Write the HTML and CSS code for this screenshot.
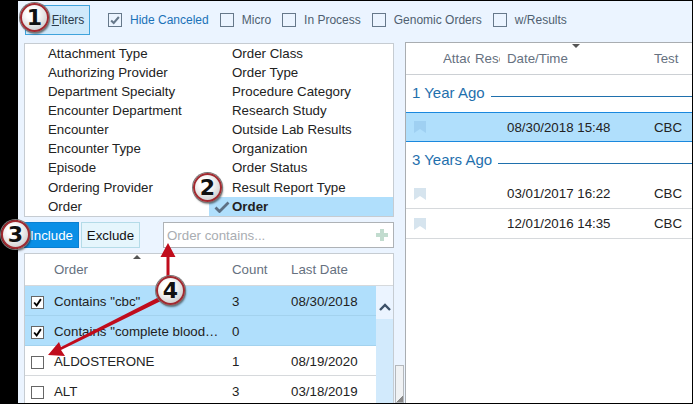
FILE: index.html
```html
<!DOCTYPE html>
<html lang="en">
<head>
    <meta charset="UTF-8">
    <meta name="viewport" content="width=device-width, initial-scale=1.0">
    <title>Order Filters</title>
    <link rel="stylesheet" href="styles.css">
</head>
<body>
<div class="app">

    <div class="toolbar">
        <button class="filters-btn"><u>F</u>ilters</button>
        <label class="opt opt-on"><span class="box"><svg viewBox="0 0 14 14"><path d="M2.5 7.5l3 3 6-7" fill="none" stroke="#66788a" stroke-width="2.4"/></svg></span>Hide Canceled</label>
        <label class="opt"><span class="box"></span>Micro</label>
        <label class="opt"><span class="box"></span>In Process</label>
        <label class="opt"><span class="box"></span>Genomic Orders</label>
        <label class="opt"><span class="box"></span>w/Results</label>
    </div>

    <div class="main">
        <div class="left">
            <div class="filter-list">
                <ul class="filter-col first">
                    <li>Attachment Type</li>
                    <li>Authorizing Provider</li>
                    <li>Department Specialty</li>
                    <li>Encounter Department</li>
                    <li>Encounter</li>
                    <li>Encounter Type</li>
                    <li>Episode</li>
                    <li>Ordering Provider</li>
                    <li>Order</li>
                </ul>
                <ul class="filter-col second">
                    <li>Order Class</li>
                    <li>Order Type</li>
                    <li>Procedure Category</li>
                    <li>Research Study</li>
                    <li>Outside Lab Results</li>
                    <li>Organization</li>
                    <li>Order Status</li>
                    <li>Result Report Type</li>
                    <li class="picked"><svg class="tick" viewBox="0 0 16 12"><path d="M1.5 6.5l4 4 9-9" fill="none" stroke="#5d7084" stroke-width="2.8"/></svg>Order</li>
                </ul>
            </div>

            <div class="actions">
                <button class="inc-btn">Include</button>
                <button class="exc-btn">Exclude</button>
                <div class="contains">
                    <span>Order contains...</span>
                    <svg class="plus" viewBox="0 0 12 12"><path d="M4 0h4v4h4v4H8v4H4V8H0V4h4z" fill="#c2dccf"/></svg>
                </div>
            </div>

            <div class="values">
                <div class="caret-up"></div>
                <div class="values-head">
                    <span></span><span>Order</span><span>Count</span><span>Last Date</span>
                </div>
                <div class="values-body">
                    <div class="values-rows">
                        <div class="vrow on">
                            <span class="cb"><svg viewBox="0 0 13 13"><path d="M2.5 6.5l3 3.5 5-7.5" fill="none" stroke="#000" stroke-width="2.2"/></svg></span>
                            <span>Contains "cbc"</span><span>3</span><span>08/30/2018</span>
                        </div>
                        <div class="vrow on">
                            <span class="cb"><svg viewBox="0 0 13 13"><path d="M2.5 6.5l3 3.5 5-7.5" fill="none" stroke="#000" stroke-width="2.2"/></svg></span>
                            <span>Contains "complete blood…</span><span>0</span><span></span>
                        </div>
                        <div class="vrow">
                            <span class="cb"></span>
                            <span>ALDOSTERONE</span><span>1</span><span>08/19/2020</span>
                        </div>
                        <div class="vrow">
                            <span class="cb"></span>
                            <span>ALT</span><span>3</span><span>03/18/2019</span>
                        </div>
                    </div>
                    <div class="inner-scroll">
                        <div class="scroll-up"><svg viewBox="0 0 12 8"><path d="M1 7l5-5 5 5" fill="none" stroke="#3c5068" stroke-width="2.4"/></svg></div>
                    </div>
                </div>
            </div>
        </div>

        <div class="gutter">
            <div class="thumb"></div>
        </div>

        <div class="results">
            <div class="caret-down"></div>
            <div class="results-head">
                <span></span>
                <span class="clip attach">Attachment</span>
                <span class="clip rese">Research</span>
                <span>Date/Time</span>
                <span>Test</span>
            </div>

            <div class="group"><span>1 Year Ago</span><i></i></div>
            <div class="rrow on">
                <svg class="mark" viewBox="0 0 12 12"><path d="M0 0h12v12L6 8l-6 4z"/></svg>
                <span></span><span></span>
                <span>08/30/2018 15:48</span><span>CBC</span>
            </div>

            <div class="group older"><span>3 Years Ago</span><i></i></div>
            <div class="rrow">
                <svg class="mark" viewBox="0 0 12 12"><path d="M0 0h12v12L6 8l-6 4z"/></svg>
                <span></span><span></span>
                <span>03/01/2017 16:22</span><span>CBC</span>
            </div>
            <div class="rrow">
                <svg class="mark" viewBox="0 0 12 12"><path d="M0 0h12v12L6 8l-6 4z"/></svg>
                <span></span><span></span>
                <span>12/01/2016 14:35</span><span>CBC</span>
            </div>
        </div>
    </div>

    <!-- callouts sit on top of everything -->
    <svg class="arrows" viewBox="0 0 693 404" width="693" height="404">
        <path d="M168 243l7.500 14h-6v20h-3v-20h-6z" fill="#c00c1c"/>
        <path d="M165 299L61 350l4 6-17 -1 11-13 2 5L163 295z" fill="#c00c1c"/>
    </svg>
    <div class="callout c1">1</div>
    <div class="callout c2">2</div>
    <div class="callout c3">3</div>
    <div class="callout c4">4</div>
</div>
</body>
</html>
```

FILE: styles.css
```css
* {
    margin: 0;
    padding: 0;
    box-sizing: border-box;
}

html, body {
    width: 693px;
    height: 404px;
    overflow: hidden;
    background-color: #000;
}

body {
    padding: 1px 1px 1px 18px;
    font-family: "Liberation Sans", Arial, sans-serif;
    font-size: 13.3px;
    color: #222;
}

.app {
    width: 674px;
    height: 402px;
    background-color: #ebf4ff;
    overflow: hidden;
}

/* top bar */
.toolbar {
    height: 41px;
    padding: 4px 0 7px 7px;
    display: flex;
    align-items: center;
    font-size: 12px;
}

.filters-btn {
    width: 65px;
    height: 30px;
    margin-right: 18px;
    padding-left: 21px;
    background-color: #cfe9fb;
    border: 1px solid #3fa3dc;
    font: inherit;
    color: #2a3a4a;
}

.opt {
    display: flex;
    align-items: center;
    margin-right: 11px;
    color: #4f5f70;
}

.opt-on {
    color: #1a72b8;
}

.box {
    width: 14px;
    height: 14px;
    margin-right: 8px;
    border: 1px solid #66788a;
    display: block;
}

.box svg {
    display: block;
    width: 12px;
    height: 12px;
}

.main {
    display: flex;
    height: 361px;
}

.left {
    width: 370px;
    margin-left: 6px;
    padding-top: 1px;
}

/* filter picker */
.filter-list {
    height: 174px;
    display: flex;
    background-color: #fff;
    border: 1px solid #c6ccd2;
}

.filter-col {
    list-style: none;
}

.filter-col li {
    height: 19px;
    line-height: 19px;
    white-space: nowrap;
}

.filter-col li:nth-child(8) {
    margin-top: 1px;
}

.first {
    width: 184px;
    padding-left: 23px;
}

.second {
    flex: 1;
}

.second li {
    padding-left: 23px;
    position: relative;
}

.picked {
    background-color: #b0dffc;
    font-weight: bold;
}

.tick {
    position: absolute;
    left: 5px;
    top: 4px;
    width: 16px;
    height: 12px;
}

/* include / exclude row */
.actions {
    display: flex;
    height: 26px;
    margin-top: 5px;
}

.inc-btn {
    width: 55px;
    background-color: #0a8fe6;
    border: 1px solid #0a7fd0;
    color: #fff;
    font: inherit;
}

.exc-btn {
    width: 59px;
    margin-left: 2px;
    background-color: #e5f5fc;
    border: 1px solid #b4dbe8;
    color: #111;
    font: inherit;
}

.contains {
    width: 231px;
    margin-left: 23px;
    padding: 0 5px 0 3px;
    display: flex;
    align-items: center;
    justify-content: space-between;
    background-color: #fff;
    border: 1px solid #aeb2b6;
    color: #a9adb2;
}

.plus {
    width: 12px;
    height: 12px;
}

/* order values */
.values {
    position: relative;
    height: 160px;
    margin-top: 5px;
    background-color: #fff;
    border: 1px solid #c6ccd2;
}

.caret-up {
    position: absolute;
    left: 108px;
    top: 1px;
    border-left: 4px solid transparent;
    border-right: 4px solid transparent;
    border-bottom: 4px solid #555;
}

.values-head,
.vrow {
    display: grid;
    grid-template-columns: 29px 178px 59px 1fr;
    align-items: center;
}

.values-head {
    height: 32px;
    padding-bottom: 1px;
    color: #66717f;
    border-bottom: 1px solid #d6d9dc;
}

.values-body {
    display: flex;
}

.values-rows {
    width: 351px;
}

.vrow {
    height: 30px;
    padding-top: 1px;
    border-bottom: 1px solid #d6d9dc;
    white-space: nowrap;
}

.vrow.on {
    background-color: #b0dffc;
    border-bottom-color: #a3d2ee;
}

.cb {
    width: 13px;
    height: 13px;
    margin: 2px 0 0 6px;
    background-color: #fff;
    border: 1px solid #666;
    display: block;
}

.cb svg {
    display: block;
    width: 11px;
    height: 11px;
}

.inner-scroll {
    flex: 1;
    background-color: #d2eafc;
}

.scroll-up {
    height: 33px;
    padding-top: 17px;
    background-color: #ebf4ff;
}

.scroll-up svg {
    display: block;
    width: 12px;
    height: 8px;
    margin: 0 auto;
}

/* outer scrollbar between the two panes */
.gutter {
    width: 11px;
    padding: 0 1px;
    display: flex;
    flex-direction: column;
    justify-content: flex-end;
}

.thumb {
    height: 38px;
    background: linear-gradient(135deg, #f0f2f4 85%, #888 85%);
    border: 1px solid #b4b8bc;
}

/* results pane */
.results {
    position: relative;
    flex: 1;
    background-color: #fff;
    border-top: 1px solid #a9adb1;
    border-left: 1px solid #a9adb1;
}

.caret-down {
    position: absolute;
    left: 166px;
    top: 1px;
    border-left: 4px solid transparent;
    border-right: 4px solid transparent;
    border-top: 4px solid #555;
}

.results-head,
.rrow {
    display: grid;
    grid-template-columns: 37px 32px 32px 147px 1fr;
    align-items: center;
}

.results-head {
    height: 32px;
    color: #66717f;
    border-bottom: 1px solid #ccd0d4;
}

.clip {
    overflow: hidden;
    white-space: nowrap;
}

.attach {
    width: 27px;
}

.rese {
    width: 25px;
}

.group {
    height: 37px;
    padding: 0 0 3px 6px;
    display: flex;
    align-items: center;
    font-size: 15px;
    color: #1f70ad;
}

.group i {
    flex: 1;
    height: 1px;
    margin: 8px 0 0 6px;
    background-color: #1f70ad;
}

.group.older {
    padding-bottom: 2px;
}

.group.older i {
    margin-top: 7px;
}

.rrow {
    height: 30px;
    border-bottom: 1px solid #d6d9dc;
}

.rrow.on {
    background-color: #b0dffc;
    border-top: 1px solid #1a88de;
    border-bottom: 1px solid #1a88de;
}

.mark {
    width: 12px;
    height: 12px;
    margin-left: 8px;
    fill: #d6e4ee;
}

.on .mark {
    fill: #9fd0f2;
}

/* numbered callouts */
.arrows {
    position: absolute;
    left: 0;
    top: 0;
}

.callout {
    position: absolute;
    width: 29px;
    height: 29px;
    border-radius: 50%;
    border: 2px solid #a12a30;
    background: radial-gradient(circle at 40% 35%, #fff 25%, #bdbdbd 100%);
    box-shadow: 0 0 0 1px #777, 1px 2px 2px rgba(0, 0, 0, 0.5);
    font-family: "DejaVu Sans", sans-serif;
    font-size: 22px;
    font-weight: bold;
    line-height: 25px;
    text-align: center;
    color: #111;
}

.c1 { left: 20px; top: 3px; }
.c2 { left: 193px; top: 173px; }
.c3 { left: 1px; top: 220px; }
.c4 { left: 156px; top: 276px; }
```
